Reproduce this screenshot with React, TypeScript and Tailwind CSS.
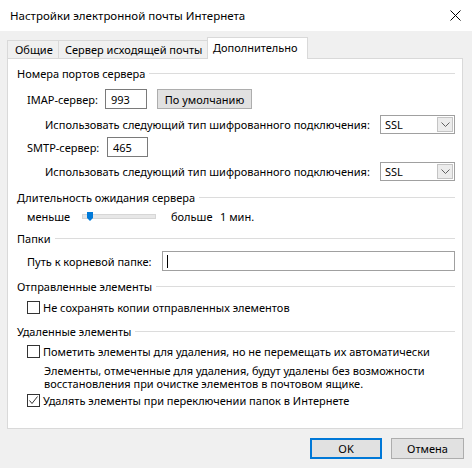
import React from "react";

const font = { fontFamily: '"Noto Sans", "Segoe UI", sans-serif' };

function Header({ text, mt }: { text: string; mt: string }) {
  return (
    <div className={`flex items-center h-[16px] ${mt}`}>
      <span className="whitespace-nowrap">{text}</span>
      <div className="flex-1 h-px bg-[#dcdcdc] ml-[4px]" />
    </div>
  );
}

function Select({ mt }: { mt: string }) {
  return (
    <div className={`flex items-center h-[22px] pl-[28px] justify-between ${mt}`}>
      <span className="whitespace-nowrap">Использовать следующий тип шифрованного подключения:</span>
      <div className="w-[75px] h-[19px] border border-[#a0a0a0] bg-white flex items-center justify-between pl-[4px] pr-[1px]">
        <span>SSL</span>
        <div className="w-[16px] h-[15px] border border-[#c4c4c4] bg-[#ececec] flex items-center justify-center">
          <svg width="9" height="5" viewBox="0 0 9 5">
            <path d="M0.5 0.5 L4.5 4.5 L8.5 0.5" fill="none" stroke="#606060" strokeWidth="1" />
          </svg>
        </div>
      </div>
    </div>
  );
}

function Checkbox({ checked }: { checked?: boolean }) {
  return (
    <div className="w-[13px] h-[13px] border border-[#333333] bg-white flex items-center justify-center shrink-0">
      {checked && (
        <svg width="11" height="11" viewBox="0 0 11 11">
          <path d="M1.5 5.5 L4 8.5 L9.5 1.5" fill="none" stroke="#333333" strokeWidth="1" />
        </svg>
      )}
    </div>
  );
}

export default function App() {
  return (
    <div className="w-[472px] h-[468px] bg-[#f0f0f0] text-[11px] text-black overflow-hidden leading-none" style={font}>
      {/* Title bar */}
      <div className="h-[31px] bg-white flex items-center justify-between pl-[10px] pr-[11px]">
        <span className="text-[11.5px]">Настройки электронной почты Интернета</span>
        <svg width="11" height="11" viewBox="0 0 11 11">
          <path d="M0.5 0.5 L10.5 10.5 M10.5 0.5 L0.5 10.5" stroke="#000" strokeWidth="1" />
        </svg>
      </div>

      {/* Tabs */}
      <div className="flex items-end h-[21px] mt-[6px] ml-[7px] relative z-10">
        <div className="w-[52px] h-[18px] border-l border-t border-r border-[#d9d9d9] flex items-center pl-[7px] whitespace-nowrap">
          Общие
        </div>
        <div className="w-[148px] h-[18px] border-t border-[#d9d9d9] flex items-center pl-[6px] whitespace-nowrap">
          Сервер исходящей почты
        </div>
        <div className="w-[101px] h-[22px] -mb-[1px] border-l border-t border-r border-[#d9d9d9] bg-white flex items-center pl-[5px] pb-[2px] whitespace-nowrap">
          Дополнительно
        </div>
      </div>

      {/* Panel */}
      <div className="ml-[7px] w-[456px] h-[371px] border border-[#d9d9d9] bg-white pl-[9px] pr-[7px] pt-[6px]">
        <Header text="Номера портов сервера" mt="" />

        <div className="flex items-center h-[22px] mt-[7px] pl-[10px]">
          <span className="w-[78px] whitespace-nowrap">IMAP-сервер:</span>
          <div className="w-[42px] h-[20px] border border-[#7a7a7a] bg-white flex items-center pl-[5px]">993</div>
          <div className="ml-[10px] w-[95px] h-[20px] border border-[#adadad] bg-[#e1e1e1] flex items-center justify-center">
            По умолчанию
          </div>
        </div>

        <Select mt="mt-[3px]" />

        <div className="flex items-center h-[22px] mt-[1px] pl-[10px]">
          <span className="w-[80px] whitespace-nowrap">SMTP-сервер:</span>
          <div className="w-[41px] h-[20px] border border-[#7a7a7a] bg-white flex items-center pl-[5px]">465</div>
        </div>

        <Select mt="mt-[2px]" />

        <Header text="Длительность ожидания сервера" mt="mt-[7px]" />

        <div className="flex items-center h-[16px] mt-[3px] pl-[10px]">
          <span className="w-[55px]">меньше</span>
          <div className="relative w-[74px] h-[5px] bg-[#e7e7e7] border border-[#d6d6d6]">
            <svg className="absolute left-[4px] -top-[3px]" width="6" height="9" viewBox="0 0 6 9">
              <path d="M0 0 H6 V6 L3 9 L0 6 Z" fill="#007ad9" />
            </svg>
          </div>
          <span className="ml-[15px] w-[49px]">больше</span>
          <span>1 мин.</span>
        </div>

        <Header text="Папки" mt="mt-[6px]" />

        <div className="flex items-center h-[24px] mt-[3px] pl-[10px]">
          <span className="w-[135px] whitespace-nowrap">Путь к корневой папке:</span>
          <div className="flex-1 h-[20px] border border-[#a0a0a0] bg-white flex items-center pl-[4px]">
            <div className="w-px h-[13px] bg-black" />
          </div>
        </div>

        <Header text="Отправленные элементы" mt="mt-[5px]" />

        <div className="flex items-center h-[16px] mt-[5px] pl-[10px] gap-[3px]">
          <Checkbox />
          <span className="whitespace-nowrap">Не сохранять копии отправленных элементов</span>
        </div>

        <Header text="Удаленные элементы" mt="mt-[8px]" />

        <div className="flex items-center h-[16px] mt-[4px] pl-[10px] gap-[3px]">
          <Checkbox />
          <span className="whitespace-nowrap">Пометить элементы для удаления, но не перемещать их автоматически</span>
        </div>

        <div className="mt-[5px] pl-[27px] leading-[13px]">
          <div className="h-[13px] whitespace-nowrap">Элементы, отмеченные для удаления, будут удалены без возможности</div>
          <div className="h-[13px] whitespace-nowrap">восстановления при очистке элементов в почтовом ящике.</div>
        </div>

        <div className="flex items-center h-[16px] mt-[2px] pl-[10px] gap-[3px]">
          <Checkbox checked />
          <span className="whitespace-nowrap">Удалять элементы при переключении папок в Интернете</span>
        </div>
      </div>

      {/* Buttons */}
      <div className="flex justify-end gap-[9px] mt-[9px] pr-[8px]">
        <div className="w-[72px] h-[21px] border-2 border-[#0078d7] bg-[#e1e1e1] flex items-center justify-center">OK</div>
        <div className="w-[73px] h-[21px] border border-[#adadad] bg-[#e1e1e1] flex items-center justify-center">Отмена</div>
      </div>
    </div>
  );
}
